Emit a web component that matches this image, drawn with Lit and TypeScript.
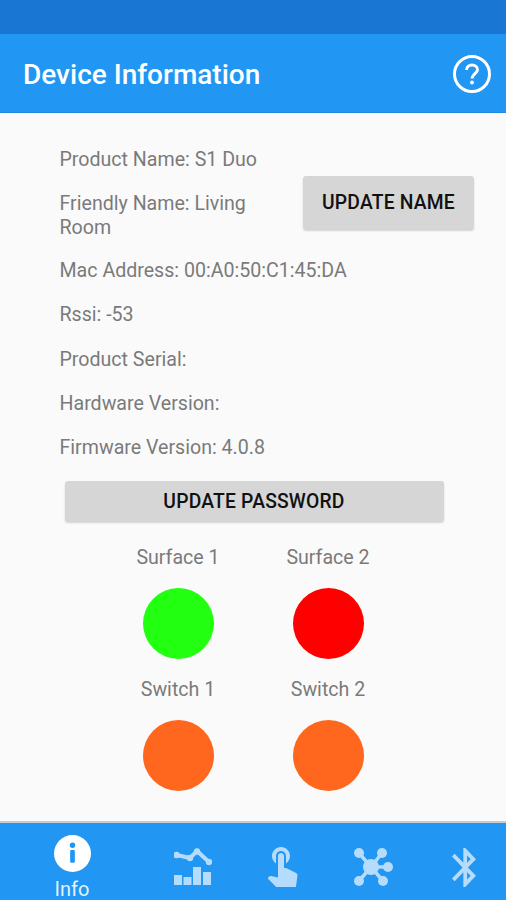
import { LitElement, html, css } from "lit";
import { customElement } from "lit/decorators.js";

const sensors = [
  { label: "Surface 1", color: "#22ff11" },
  { label: "Surface 2", color: "#ff0000" },
  { label: "Switch 1", color: "#ff671f" },
  { label: "Switch 2", color: "#ff671f" },
];

@customElement("app-root")
export class AppRoot extends LitElement {
  static styles = css`
    :host {
      display: flex;
      flex-direction: column;
      height: 900px;
      overflow: hidden;
      background: #fafafa;
      font-family: Roboto, "Liberation Sans", sans-serif;
      color: #7a7a7a;
    }
    .status {
      height: 34px;
      background: #1976d2;
    }
    .toolbar {
      height: 79px;
      box-sizing: border-box;
      display: flex;
      align-items: center;
      justify-content: space-between;
      padding: 3px 15px 0 23px;
      background: #2196f3;
      border-bottom: 1px solid #1e88e5;
      color: #fff;
      font-size: 28px;
      font-weight: 500;
    }
    .toolbar svg {
      width: 38px;
      height: 38px;
      margin-top: -2px;
      display: block;
    }
    main {
      flex: 1;
      padding: 35px 32px 0 59.5px;
      font-size: 19.6px;
      line-height: 23.5px;
    }
    .row {
      margin-bottom: 20.7px;
    }
    .name-row {
      display: flex;
      align-items: flex-start;
      justify-content: space-between;
      gap: 40px;
      margin-bottom: 20px;
    }
    button {
      border: 0;
      border-radius: 3px;
      background: #d6d6d6;
      box-shadow: 0 2px 2px rgba(0, 0, 0, 0.16);
      color: #111;
      font: 500 19.3px Roboto, "Liberation Sans", sans-serif;
      letter-spacing: 0.2px;
      padding: 0;
    }
    .name-btn {
      flex: none;
      width: 171px;
      height: 53px;
      margin-top: -16px;
    }
    .pass-btn {
      display: block;
      width: 379px;
      height: 40px;
      margin: 22px 0 0 5px;
    }
    .sensors {
      display: grid;
      grid-template-columns: 150px 150px;
      margin: 24.5px 0 0 43.5px;
      row-gap: 19.5px;
      text-align: center;
    }
    .dot {
      width: 71px;
      height: 71px;
      border-radius: 50%;
      margin: 18.5px auto 0;
    }
    nav {
      height: 79px;
      box-sizing: border-box;
      display: grid;
      grid-template-columns: 144px repeat(4, 90.5px);
      background: #2196f3;
      border-top: 2px solid #c4ccd2;
    }
    nav > div {
      display: flex;
      flex-direction: column;
      align-items: center;
      justify-content: center;
      padding: 10px 0 0 7px;
    }
    nav > .active {
      justify-content: flex-start;
      padding: 12px 0 0;
      color: #e3f2fd;
      font-size: 20px;
      line-height: 24px;
    }
    .active span {
      margin-top: 5px;
    }
    nav svg {
      display: block;
      fill: #b5dcfc;
    }
  `;

  render() {
    return html`
      <div class="status"></div>
      <header class="toolbar">
        <span>Device Information</span>
        <svg viewBox="0 0 38 38" fill="none" stroke="#fff" stroke-width="3">
          <circle cx="19" cy="19" r="17.5" />
          <path d="M13.5 15c0-3 2.400-5 5.500-5s5.500 2 5.500 4.800c0 3.700-5.500 4.200-5.500 8.700" />
          <circle cx="19" cy="27.500" r="1.900" fill="#fff" stroke="none" />
        </svg>
      </header>
      <main>
        <div class="row">Product Name: S1 Duo</div>
        <div class="name-row">
          <div>Friendly Name: Living Room</div>
          <button class="name-btn">UPDATE NAME</button>
        </div>
        <div class="row">Mac Address: 00:A0:50:C1:45:DA</div>
        <div class="row">Rssi: -53</div>
        <div class="row">Product Serial:</div>
        <div class="row">Hardware Version:</div>
        <div class="row">Firmware Version: 4.0.8</div>
        <button class="pass-btn">UPDATE PASSWORD</button>
        <div class="sensors">
          ${sensors.map(
            (s) => html`<div>
              <div>${s.label}</div>
              <div class="dot" style="background:${s.color}"></div>
            </div>`
          )}
        </div>
      </main>
      <nav>
        <div class="active">
          <svg width="37" height="37" viewBox="0 0 38 38">
            <circle cx="19" cy="19" r="19" fill="#fff" />
            <circle cx="19" cy="10.5" r="2.800" fill="#2196f3" />
            <rect x="16.600" y="15.500" width="4.800" height="13" rx="1" fill="#2196f3" />
          </svg>
          <span>Info</span>
        </div>
        <div>
          <svg width="38" height="38" viewBox="0 0 38 38">
            <path d="M2.500 7 L16 10 L23 3 L35 14" fill="none" stroke="#b5dcfc" stroke-width="4" />
            <circle cx="2.500" cy="7" r="3.200" />
            <circle cx="16" cy="10" r="3.200" />
            <circle cx="23" cy="3.500" r="3.200" />
            <circle cx="35" cy="14" r="3.200" />
            <rect x="0" y="27" width="8" height="10" />
            <rect x="9.500" y="29" width="8" height="8" />
            <rect x="19" y="19" width="8" height="18" />
            <rect x="29" y="24" width="8" height="13" />
          </svg>
        </div>
        <div>
          <svg width="30" height="40" viewBox="5 3 15 20">
            <path d="M9 11.24V7.5C9 6.12 10.12 5 11.5 5S14 6.12 14 7.5v3.74c1.21-.81 2-2.18 2-3.74C16 5.01 13.99 3 11.5 3S7 5.01 7 7.5c0 1.56.79 2.93 2 3.74zm9.84 4.63l-4.54-2.26c-.17-.07-.35-.11-.54-.11H13v-6c0-.83-.67-1.5-1.5-1.5S10 6.67 10 7.5v10.74l-3.43-.72c-.08-.01-.15-.03-.24-.03-.31 0-.59.13-.79.33l-.79.8 4.94 4.94c.27.27.65.44 1.06.44h6.79c.75 0 1.33-.55 1.44-1.28l.75-5.27c.01-.07.02-.14.02-.2 0-.62-.38-1.16-.91-1.38z" />
          </svg>
        </div>
        <div>
          <svg width="39" height="38" viewBox="0 0 39 38">
            <path d="M5 5 L17 19 L5 33 M17 19 L28 5 M17 19 L34 19 M17 19 L29 33" fill="none" stroke="#b5dcfc" stroke-width="3.500" />
            <circle cx="17" cy="19" r="8" />
            <circle cx="5" cy="5" r="5" />
            <circle cx="28" cy="5" r="5" />
            <circle cx="34" cy="19" r="5" />
            <circle cx="5" cy="33" r="5" />
            <circle cx="29" cy="33" r="5" />
          </svg>
        </div>
        <div>
          <svg width="24" height="39" viewBox="5 2 12.71 20" preserveAspectRatio="none">
            <path d="M17.71 7.71L12 2h-1v7.59L6.41 5 5 6.41 10.59 12 5 17.59 6.41 19 11 14.41V22h1l5.71-5.71-4.3-4.29 4.3-4.29zM13 5.83l1.88 1.88L13 9.59V5.83zm1.88 10.46L13 18.17v-3.76l1.88 1.88z" />
          </svg>
        </div>
      </nav>
    `;
  }
}
